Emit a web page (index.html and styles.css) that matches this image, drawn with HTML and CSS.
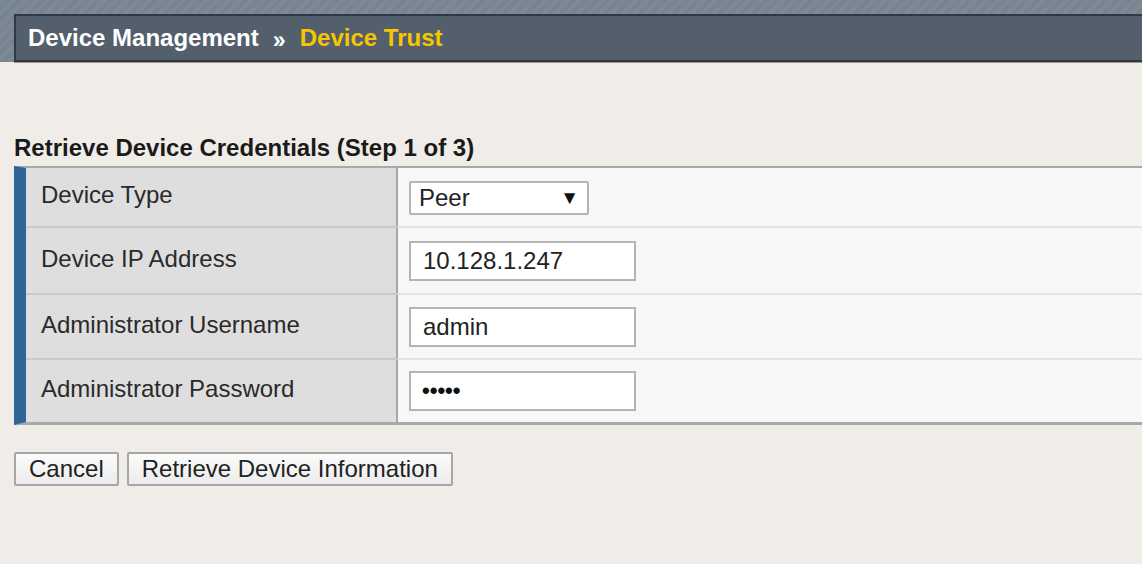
FILE: index.html
```html
<!DOCTYPE html>
<html>
<head>
<meta charset="utf-8">
<link rel="stylesheet" href="styles.css">
</head>
<body>
<div class="masthead">
  <div class="header">
    <span class="crumb">Device Management</span>
    <span class="sep">&rsaquo;&rsaquo;</span>
    <span class="current">Device Trust</span>
  </div>
</div>
<div class="content">
  <div class="title">Retrieve Device Credentials (Step 1 of 3)</div>
  <div class="form">
    <div class="row r1">
      <div class="label">Device Type</div>
      <div class="value">
        <div class="select"><span>Peer</span><span class="arrow">&#9660;</span></div>
      </div>
    </div>
    <div class="row r2">
      <div class="label">Device IP Address</div>
      <div class="value"><div class="input">10.128.1.247</div></div>
    </div>
    <div class="row r3">
      <div class="label">Administrator Username</div>
      <div class="value"><div class="input">admin</div></div>
    </div>
    <div class="row r4">
      <div class="label">Administrator Password</div>
      <div class="value"><div class="input dots">&#8226;&#8226;&#8226;&#8226;&#8226;</div></div>
    </div>
  </div>
  <div class="buttons">
    <div class="btn">Cancel</div>
    <div class="btn">Retrieve Device Information</div>
  </div>
</div>
</body>
</html>
```

FILE: styles.css
```css
html, body {
  margin: 0;
  padding: 0;
}
body {
  background: #f0ece7;
  font-family: "Liberation Sans", Arial, sans-serif;
  color: #222;
  width: 1142px;
  height: 564px;
  overflow: hidden;
}
.masthead {
  padding: 14px 0 0 14px;
  background: repeating-linear-gradient(135deg, #7b8a96 0px, #7b8a96 4px, #76858f 4px, #76858f 8px);
}
.header {
  height: 44px;
  background: #535f6c;
  border-top: 2px solid #34383c;
  border-bottom: 2px solid #34383c;
  border-left: 2px solid #34383c;
  display: flex;
  align-items: center;
  padding-left: 12px;
  font-weight: bold;
  font-size: 24px;
  box-shadow: 0 1px 0 #9a958f;
}
.crumb {
  color: #ffffff;
}
.sep {
  color: #ffffff;
  font-size: 24px;
  margin: 4px 17px 0 14px;
  letter-spacing: -3px;
}
.current {
  color: #f7c600;
}
.content {
  padding: 73px 0 0 14px;
}
.title {
  font-weight: bold;
  font-size: 24px;
  color: #1a1a1a;
  height: 26px;
  line-height: 26px;
  margin-bottom: 5px;
}
.form {
  border-top: 2px solid #a8a8a8;
  border-bottom: 3px solid #a8a8a8;
  border-left: 12px solid #2f6497;
}
.row {
  display: flex;
  border-top: 2px solid #e2e2e2;
}
.row.r1 { border-top: none; height: 58px; }
.row.r2 { height: 65px; }
.row.r3 { height: 63px; }
.row.r4 { height: 62px; }
.r2 .label, .r3 .label, .r4 .label {
  box-shadow: 0 -2px 0 #c9c9c9;
}
.label {
  flex: none;
  width: 372px;
  box-sizing: border-box;
  background: #dedede;
  border-right: 2px solid #a8a8a8;
  padding-left: 15px;
  padding-bottom: 4px;
  font-size: 24px;
  color: #2a2a2a;
  display: flex;
  align-items: center;
}
.value {
  flex: 1;
  background: #f7f7f7;
  display: flex;
  align-items: center;
  padding-left: 11px;
}
.select {
  width: 180px;
  height: 34px;
  box-sizing: border-box;
  border: 2px solid #b4b4b4;
  border-radius: 2px;
  background: #fff;
  display: flex;
  align-items: center;
  justify-content: space-between;
  padding: 0 8px 0 8px;
  font-size: 24px;
  color: #222;
  margin-top: 2px;
}
.arrow {
  font-size: 19px;
  color: #111;
}
.input {
  width: 227px;
  height: 40px;
  box-sizing: border-box;
  border: 2px solid #b4b4b4;
  background: #fff;
  display: flex;
  align-items: center;
  padding-left: 12px;
  font-size: 24px;
  color: #222;
}
.input.dots {
  font-size: 22px;
  padding-left: 11px;
  font-weight: bold;
  color: #111;
}
.buttons {
  display: flex;
  gap: 8px;
  margin-top: 27px;
}
.btn {
  height: 34px;
  box-sizing: border-box;
  border: 2px solid #a6a6a6;
  border-radius: 2px;
  background: linear-gradient(#fbfbfb, #ececec);
  display: flex;
  align-items: center;
  padding: 0 13px;
  font-size: 24px;
  color: #222;
}
```
